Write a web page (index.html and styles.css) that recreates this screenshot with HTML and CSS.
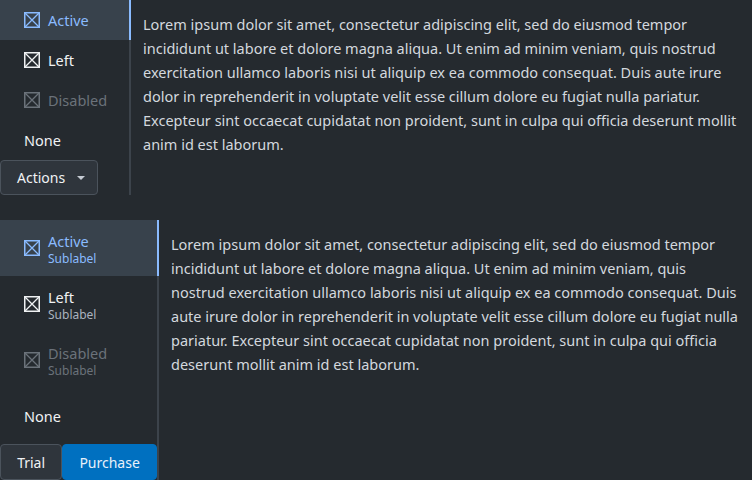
FILE: index.html
```html
<!DOCTYPE html>
<html>
<head>
<meta charset="utf-8">
<link rel="stylesheet" href="styles.css">
</head>
<body>
<div class="section s1">
  <div class="tablist">
    <div class="tab active">
      <svg class="ico" viewBox="0 0 16 16"><rect x="0.75" y="0.75" width="14.5" height="14.5" fill="none" stroke="currentColor" stroke-width="1.5"/><path d="M1 1L15 15M15 1L1 15" stroke="currentColor" stroke-width="1.3"/></svg>
      <span>Active</span>
    </div>
    <div class="tab">
      <svg class="ico" viewBox="0 0 16 16"><rect x="0.75" y="0.75" width="14.5" height="14.5" fill="none" stroke="currentColor" stroke-width="1.5"/><path d="M1 1L15 15M15 1L1 15" stroke="currentColor" stroke-width="1.3"/></svg>
      <span>Left</span>
    </div>
    <div class="tab disabled">
      <svg class="ico" viewBox="0 0 16 16"><rect x="0.75" y="0.75" width="14.5" height="14.5" fill="none" stroke="currentColor" stroke-width="1.5"/><path d="M1 1L15 15M15 1L1 15" stroke="currentColor" stroke-width="1.3"/></svg>
      <span>Disabled</span>
    </div>
    <div class="tab"><span>None</span></div>
    <div class="btnrow">
      <button class="btn">Actions <span class="caret"></span></button>
    </div>
  </div>
  <div class="panel">Lorem ipsum dolor sit amet, consectetur adipiscing elit, sed do eiusmod tempor incididunt ut labore et dolore magna aliqua. Ut enim ad minim veniam, quis nostrud exercitation ullamco laboris nisi ut aliquip ex ea commodo consequat. Duis aute irure dolor in reprehenderit in voluptate velit esse cillum dolore eu fugiat nulla pariatur. Excepteur sint occaecat cupidatat non proident, sunt in culpa qui officia deserunt mollit anim id est laborum.</div>
</div>

<div class="section s2">
  <div class="tablist">
    <div class="tab tall active">
      <svg class="ico" viewBox="0 0 16 16"><rect x="0.75" y="0.75" width="14.5" height="14.5" fill="none" stroke="currentColor" stroke-width="1.5"/><path d="M1 1L15 15M15 1L1 15" stroke="currentColor" stroke-width="1.3"/></svg>
      <div class="labels"><span class="lbl">Active</span><span class="sub">Sublabel</span></div>
    </div>
    <div class="tab tall">
      <svg class="ico" viewBox="0 0 16 16"><rect x="0.75" y="0.75" width="14.5" height="14.5" fill="none" stroke="currentColor" stroke-width="1.5"/><path d="M1 1L15 15M15 1L1 15" stroke="currentColor" stroke-width="1.3"/></svg>
      <div class="labels"><span class="lbl">Left</span><span class="sub">Sublabel</span></div>
    </div>
    <div class="tab tall disabled">
      <svg class="ico" viewBox="0 0 16 16"><rect x="0.75" y="0.75" width="14.5" height="14.5" fill="none" stroke="currentColor" stroke-width="1.5"/><path d="M1 1L15 15M15 1L1 15" stroke="currentColor" stroke-width="1.3"/></svg>
      <div class="labels"><span class="lbl">Disabled</span><span class="sub">Sublabel</span></div>
    </div>
    <div class="tab tall"><span>None</span></div>
    <div class="btnrow">
      <button class="btn trial">Trial</button>
      <button class="btn primary">Purchase</button>
    </div>
  </div>
  <div class="panel">Lorem ipsum dolor sit amet, consectetur adipiscing elit, sed do eiusmod tempor incididunt ut labore et dolore magna aliqua. Ut enim ad minim veniam, quis nostrud exercitation ullamco laboris nisi ut aliquip ex ea commodo consequat. Duis aute irure dolor in reprehenderit in voluptate velit esse cillum dolore eu fugiat nulla pariatur. Excepteur sint occaecat cupidatat non proident, sunt in culpa qui officia deserunt mollit anim id est laborum.</div>
</div>
</body>
</html>
```

FILE: styles.css
```css
html, body {
  margin: 0;
  padding: 0;
  background: #252a2f;
  font-family: "Noto Sans", sans-serif;
  font-size: 14.5px;
  color: #d3d8de;
  overflow: hidden;
  height: 480px;
}

.section {
  display: flex;
  align-items: flex-start;
}

.s2 {
  margin-top: 25px;
}

.tablist {
  display: flex;
  flex-direction: column;
  border-right: 2px solid #3c434b;
}

.s1 .tablist { width: 129px; }
.s2 .tablist { width: 157px; }

.tab {
  height: 40px;
  display: flex;
  align-items: center;
  gap: 8px;
  padding-left: 24px;
  color: #f0f2f4;
  margin-right: -2px;
  border-right: 2px solid transparent;
}

.tab.tall {
  height: 56px;
}

.tab.active {
  background: #38424c;
  color: #8abbff;
  border-right-color: #8abbff;
}

.tab.disabled {
  color: #6b727a;
}

.ico {
  width: 16px;
  height: 16px;
  flex: none;
}

.labels {
  display: flex;
  flex-direction: column;
}

.lbl {
  line-height: 20px;
}

.sub {
  font-size: 12px;
  line-height: 15px;
  color: #abb3bf;
}

.active .sub { color: #8abbff; }
.disabled .sub { color: #6b727a; }

.btnrow {
  display: flex;
}

.btn {
  font-family: "Noto Sans", sans-serif;
  font-size: 14px;
  color: #f0f2f4;
  background: #2f353c;
  border: 1px solid #4b535c;
  border-radius: 4px;
  height: 35px;
  padding: 0 10px 0 16px;
  display: flex;
  align-items: center;
  cursor: pointer;
}

.s1 .btn {
  width: 98px;
}

.caret {
  width: 0;
  height: 0;
  border-left: 4px solid transparent;
  border-right: 4px solid transparent;
  border-top: 4px solid #c5cbd3;
  margin-left: 12px;
}

.btn.trial {
  width: 63px;
  height: 36px;
  justify-content: center;
  padding: 0;
}

.btn.primary {
  width: 96px;
  height: 36px;
  justify-content: center;
  padding: 0;
  background: #0070c0;
  border-color: #0070c0;
  color: #e8f1fa;
}

.panel {
  flex: 1;
  padding: 12px 12px 0 12px;
  line-height: 24px;
  color: #d3d8de;
}
```
